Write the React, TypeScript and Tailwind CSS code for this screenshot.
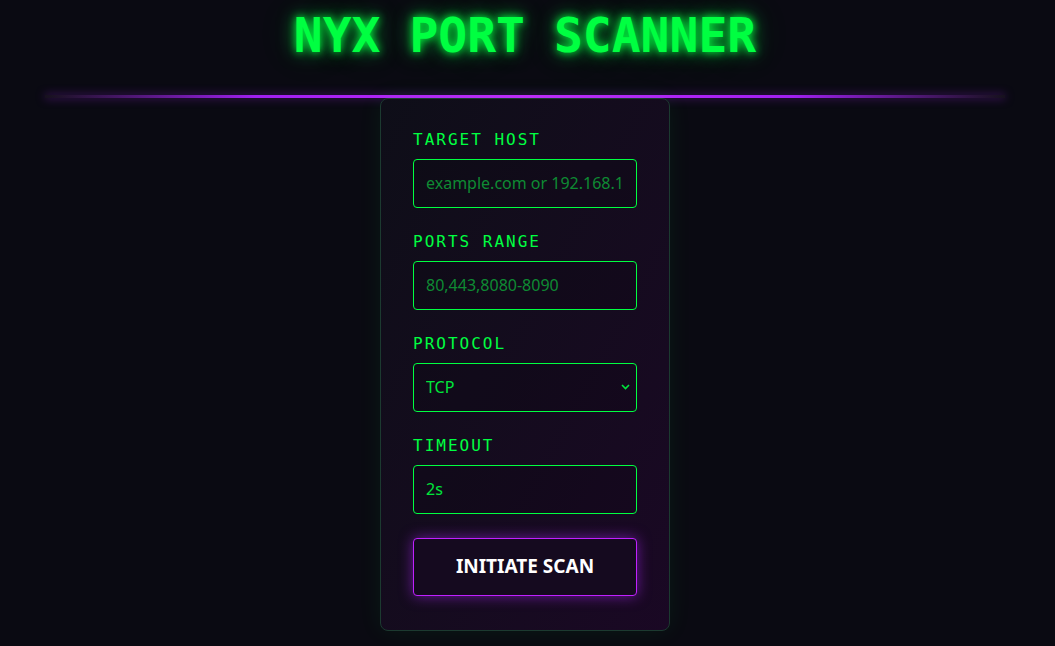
import { useState } from 'react'

const mono = 'font-["DejaVu_Sans_Mono",monospace]'

function Field({
  label,
  children,
}: {
  label: string
  children: React.ReactNode
}) {
  return (
    <div className="mb-[21px]">
      <label
        className={`block pt-[1px] mb-[7px] text-[16px] leading-6 tracking-[2px] text-[#00ff41] ${mono}`}
      >
        {label}
      </label>
      {children}
    </div>
  )
}

const inputCls =
  'block w-full h-[49px] px-3 rounded-[4px] border border-[#00ff41] bg-black/10 text-[16px] text-[#00e63b] font-["Noto_Sans",sans-serif] outline-none placeholder:text-[#0e8a33]'

export default function App() {
  const [host, setHost] = useState('')
  const [ports, setPorts] = useState('')
  const [protocol, setProtocol] = useState('TCP')
  const [timeout, setTimeoutVal] = useState('2s')

  return (
    <div className="min-h-screen bg-[#0a0a12] pl-[45px] pr-[50px]">
      <header className="pt-[7px] pb-[30px] text-center">
        <h1
          className='text-[48px] leading-[1.2] font-bold text-[#00ff41] font-["DejaVu_Sans_Mono",monospace] [text-shadow:0_0_8px_#00ff41,0_0_18px_rgba(0,255,65,0.6),0_0_40px_rgba(0,255,65,0.2)]'
        >
          NYX PORT SCANNER
        </h1>
      </header>
      {/* neon divider */}
      <div className="h-[3px] bg-[linear-gradient(90deg,#16111d_0%,#a020f0_22%,#c428ff_50%,#a020f0_78%,#16111d_100%)] shadow-[0_0_10px_rgba(176,38,255,0.5)]" />

      <main className="flex justify-center">
        <form
          onSubmit={(e) => e.preventDefault()}
          className="flex flex-col w-[290px] rounded-lg border border-[#1c3a30] bg-gradient-to-br from-[#0e0e18] to-[#1a0824] px-8 pt-[28px] pb-[34px] shadow-[0_0_24px_rgba(0,255,65,0.07)]"
        >
          <Field label="TARGET HOST">
            <input
              className={inputCls}
              placeholder="example.com or 192.168.1.1"
              value={host}
              onChange={(e) => setHost(e.target.value)}
            />
          </Field>
          <Field label="PORTS RANGE">
            <input
              className={inputCls}
              placeholder="80,443,8080-8090"
              value={ports}
              onChange={(e) => setPorts(e.target.value)}
            />
          </Field>
          <Field label="PROTOCOL">
            <div className="relative">
              <select
                className={`${inputCls} appearance-none`}
                value={protocol}
                onChange={(e) => setProtocol(e.target.value)}
              >
                <option>TCP</option>
                <option>UDP</option>
              </select>
              <svg
                className="pointer-events-none absolute right-[7px] top-[21px] w-[9px] h-[6px]"
                viewBox="0 0 9 6"
                fill="none"
                stroke="#00e63b"
                strokeWidth="1.6"
              >
                <path d="M1 1l3.5 3.5L8 1" />
              </svg>
            </div>
          </Field>
          <Field label="TIMEOUT">
            <input
              className={inputCls}
              value={timeout}
              onChange={(e) => setTimeoutVal(e.target.value)}
            />
          </Field>
          <button
            type="submit"
            className='mt-[3px] block w-full h-[58px] rounded-[4px] border border-[#c020ff] bg-[#150a1f] text-[19px] font-bold text-white font-["Noto_Sans",sans-serif] shadow-[0_0_14px_rgba(176,38,255,0.55)]'
          >
            INITIATE SCAN
          </button>
        </form>
      </main>
    </div>
  )
}
